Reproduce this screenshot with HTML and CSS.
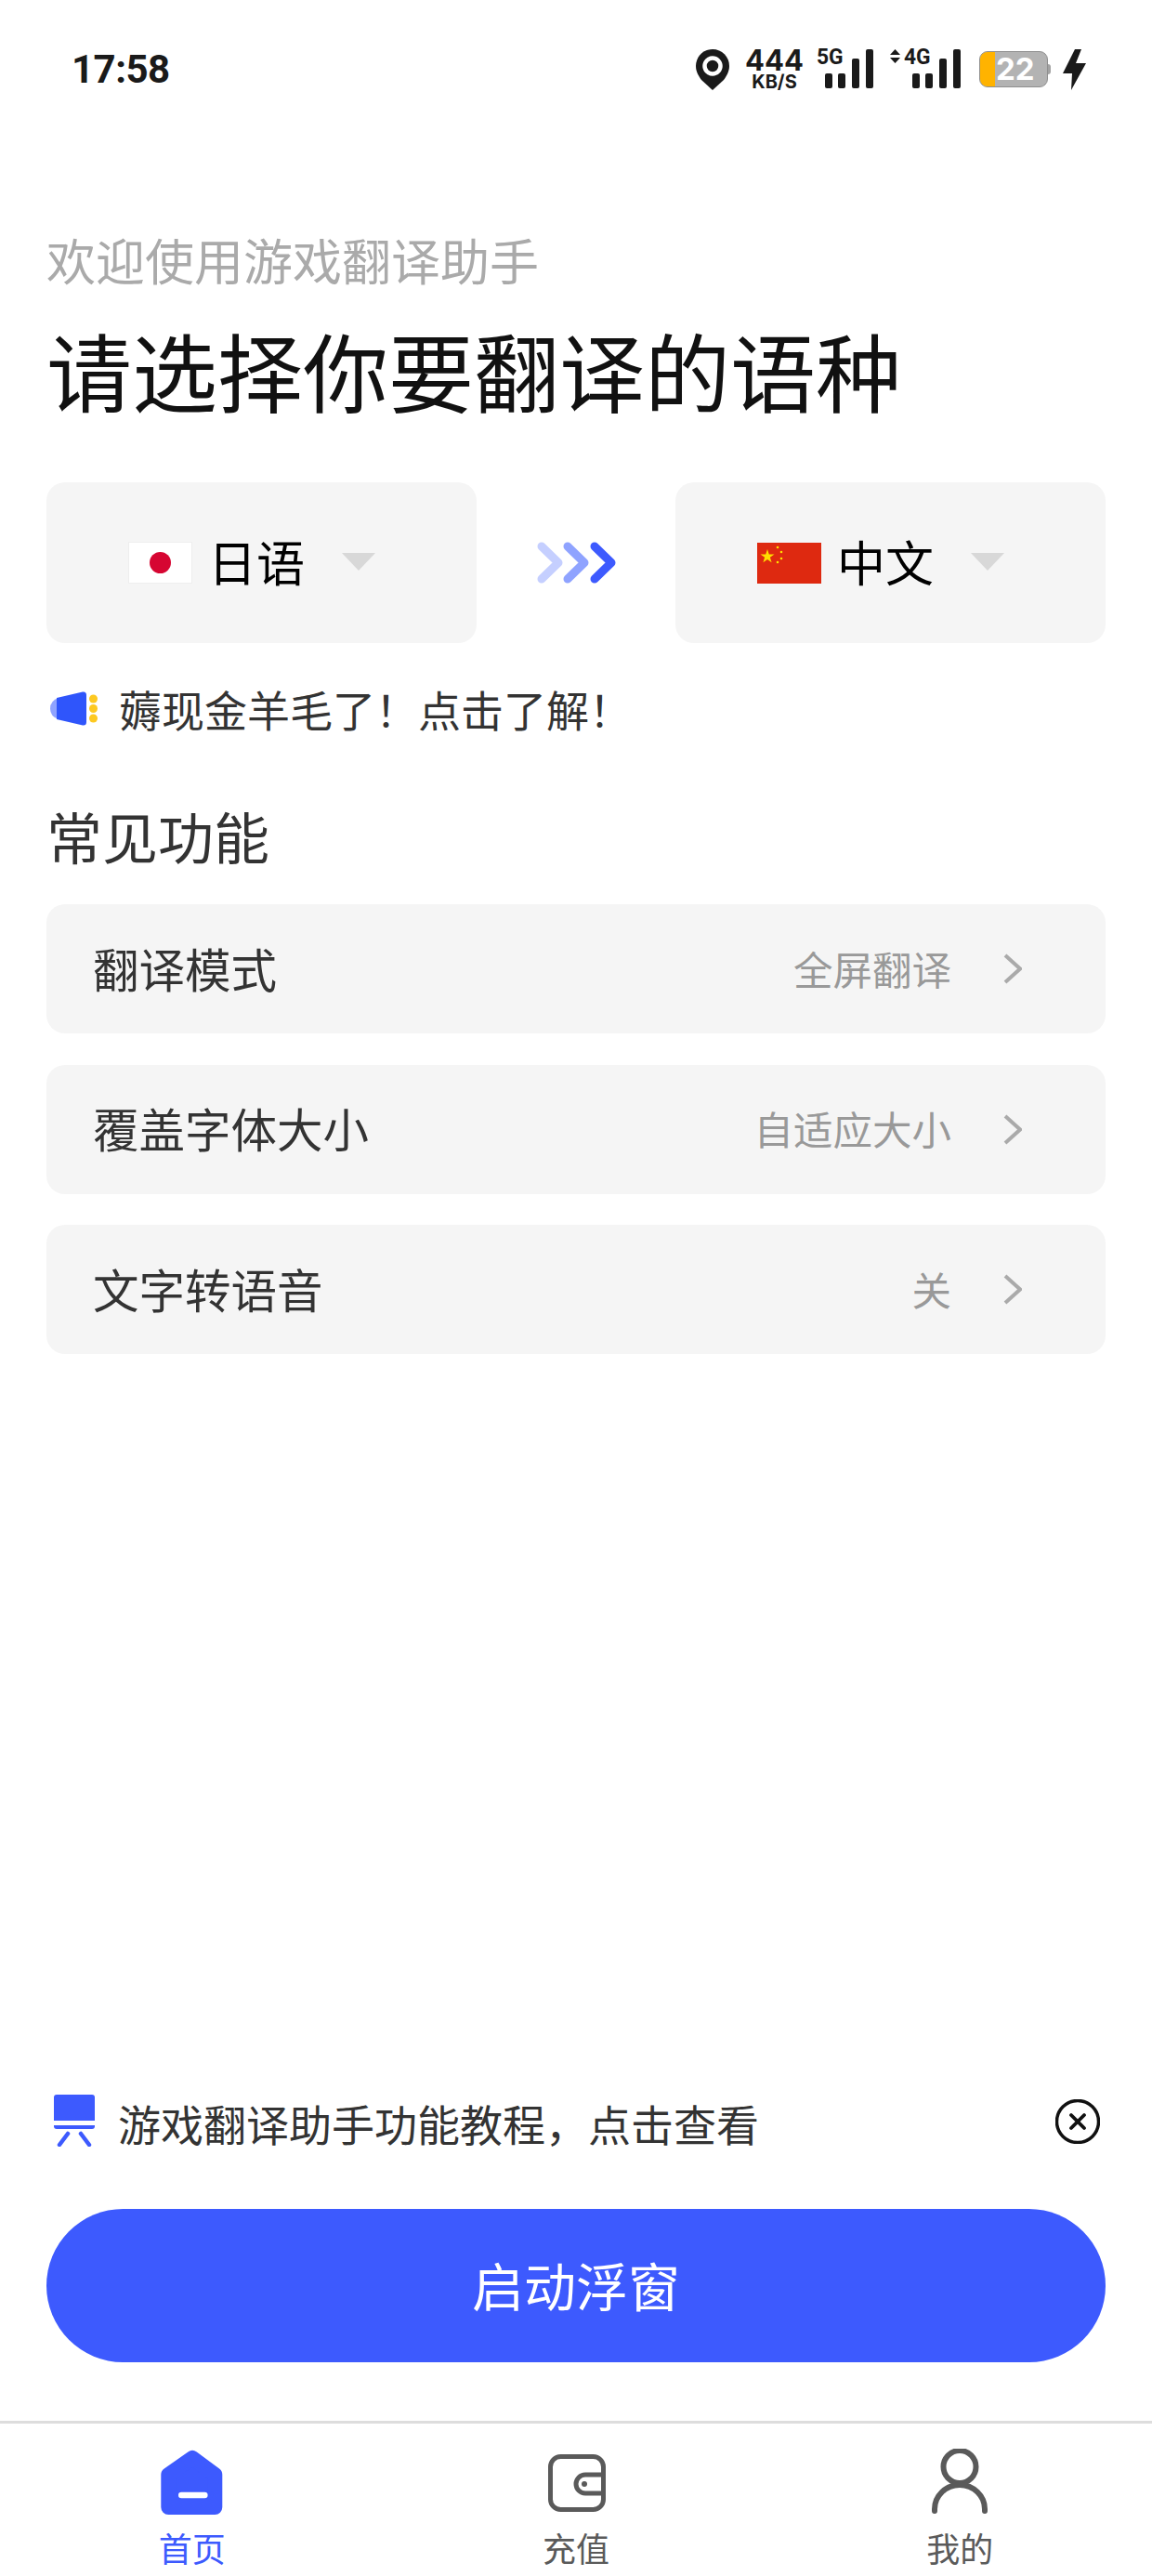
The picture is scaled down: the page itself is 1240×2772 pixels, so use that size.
FILE: index.html
```html
<!DOCTYPE html>
<html lang="zh-CN">
<head>
    <meta charset="UTF-8">
    <meta name="viewport" content="width=device-width, initial-scale=1.0">
    <title>游戏翻译助手</title>
    <link rel="stylesheet" href="styles.css">
</head>
<body>
    <div class="app">
        <div class="status-bar">
            <span class="clock">17:58</span>
            <div class="status-icons">
                <svg class="pin" width="36" height="44" viewBox="0 0 36 44">
                    <path d="M18 0C8 0 0 8 0 18c0 6 3 11 6 15l12 11 12-11c3-4 6-9 6-15C36 8 28 0 18 0z" fill="#1a1a1a"/>
                    <circle cx="18" cy="18" r="8.5" fill="none" stroke="#fff" stroke-width="4.5"/>
                </svg>
                <div class="speed">
                    <span class="speed-num">444</span>
                    <span class="speed-unit">KB/S</span>
                </div>
                <div class="net">
                    <div class="net-low">
                        <span class="net-label">5G</span>
                        <div class="net-bars"><i class="bar"></i><i class="bar"></i></div>
                    </div>
                    <i class="bar bar-mid"></i>
                    <i class="bar bar-full"></i>
                </div>
                <div class="net net-4g">
                    <svg class="net-arrows" width="11" height="15" viewBox="0 0 11 15">
                        <path d="M0 6L5.500 0L11 6zM0 9H11L5.500 15z" fill="#1a1a1a"/>
                    </svg>
                    <div class="net-low">
                        <span class="net-label">4G</span>
                        <div class="net-bars"><i class="bar"></i><i class="bar"></i></div>
                    </div>
                    <i class="bar bar-mid"></i>
                    <i class="bar bar-full"></i>
                </div>
                <div class="battery">
                    <div class="battery-level"></div>
                    <span class="battery-num">22</span>
                </div>
                <svg class="bolt" width="25" height="44" viewBox="0 0 25 44">
                    <path d="M13 0L0 26H10L9 44L25 15H14L20 0z" fill="#1a1a1a"/>
                </svg>
            </div>
        </div>

        <div class="home">
            <p class="greeting">欢迎使用游戏翻译助手</p>
            <h1 class="title">请选择你要翻译的语种</h1>

            <div class="lang-row">
                <div class="lang-card">
                    <div class="flag-jp"><span class="flag-jp-dot"></span></div>
                    <span class="lang-name">日语</span>
                    <span class="lang-caret"></span>
                </div>
                <svg class="lang-arrows" width="85" height="45" viewBox="0 0 85 45" fill="none" stroke-width="9" stroke-linecap="round" stroke-linejoin="round">
                    <path d="M5 5L23 22.500L5 40" stroke="#c5cfff"/>
                    <path d="M33 5L51 22.500L33 40" stroke="#8fa3ff"/>
                    <path d="M62 5L80 22.500L62 40" stroke="#3d5afe"/>
                </svg>
                <div class="lang-card">
                    <svg class="flag-cn" width="69" height="44" viewBox="0 0 69 44">
                        <rect width="69" height="44" fill="#de2910"/>
                        <path d="M11 7l1.800 5.400h5.700l-4.600 3.400 1.700 5.400-4.600-3.300-4.600 3.300 1.700-5.400-4.600-3.400h5.700z" fill="#ffde00"/>
                        <circle cx="22" cy="5" r="1.300" fill="#ffde00"/>
                        <circle cx="26" cy="10" r="1.300" fill="#ffde00"/>
                        <circle cx="26" cy="17" r="1.300" fill="#ffde00"/>
                        <circle cx="22" cy="21" r="1.300" fill="#ffde00"/>
                    </svg>
                    <span class="lang-name">中文</span>
                    <span class="lang-caret"></span>
                </div>
            </div>

            <div class="notice">
                <svg class="notice-icon" width="52" height="37" viewBox="0 0 52 37">
                    <path d="M9 7Q0 10 0 18.500Q0 27 9 30z" fill="#8fa3ff"/>
                    <path d="M7 7L35 0.500Q39 0 39 4V33Q39 37 35 36.500L7 30z" fill="#2f55fb"/>
                    <circle cx="46.500" cy="8" r="4.500" fill="#fdc921"/>
                    <circle cx="46.500" cy="18.500" r="4.500" fill="#fdc921"/>
                    <circle cx="46.500" cy="29" r="4.500" fill="#fdc921"/>
                </svg>
                <span class="notice-text">薅现金羊毛了！点击了解！</span>
            </div>

            <h2 class="section-title">常见功能</h2>

            <div class="option-list">
                <div class="option-row">
                    <span class="option-label">翻译模式</span>
                    <span class="option-value">全屏翻译</span>
                    <svg class="option-chevron" width="20" height="33" viewBox="0 0 20 33"><path d="M2 2L18 16.500L2 31"/></svg>
                </div>
                <div class="option-row">
                    <span class="option-label">覆盖字体大小</span>
                    <span class="option-value">自适应大小</span>
                    <svg class="option-chevron" width="20" height="33" viewBox="0 0 20 33"><path d="M2 2L18 16.500L2 31"/></svg>
                </div>
                <div class="option-row">
                    <span class="option-label">文字转语音</span>
                    <span class="option-value">关</span>
                    <svg class="option-chevron" width="20" height="33" viewBox="0 0 20 33"><path d="M2 2L18 16.500L2 31"/></svg>
                </div>
            </div>

            <div class="tutorial">
                <svg class="tutorial-icon" width="44" height="56" viewBox="0 0 44 56">
                    <path d="M3 0H41Q44 0 44 3V28H0V3Q0 0 3 0z" fill="#3d5afe"/>
                    <path d="M0 33H44V34Q44 37 41 37H3Q0 37 0 34z" fill="#3d5afe"/>
                    <path d="M15 42L6 54M29 42L38 54" fill="none" stroke="#3d5afe" stroke-width="4.500" stroke-linecap="round"/>
                </svg>
                <span class="tutorial-text">游戏翻译助手功能教程，点击查看</span>
                <svg class="tutorial-close" width="48" height="48" viewBox="0 0 48 48" fill="none" stroke="#111" stroke-linecap="round">
                    <circle cx="24" cy="24" r="22.500" stroke-width="3.500"/>
                    <path d="M17 17L31 31M31 17L17 31" stroke-width="3.800"/>
                </svg>
            </div>

            <div class="start-btn">启动浮窗</div>
        </div>

        <div class="tab-bar">
            <div class="tab tab-active">
                <svg width="72" height="72" viewBox="0 0 72 72">
                    <path d="M36 10L60.300 28V63H10.300V28z" fill="#3d5afe" stroke="#3d5afe" stroke-width="16" stroke-linejoin="round"/>
                    <rect x="21" y="46.700" width="31.600" height="6.600" rx="3.300" fill="#fff"/>
                </svg>
                <span class="tab-label">首页</span>
            </div>
            <div class="tab">
                <svg width="72" height="72" viewBox="0 0 72 72" fill="none" stroke="#5a5a5a" stroke-width="5">
                    <rect x="8.500" y="8.500" width="57" height="57" rx="11"/>
                    <path d="M65 28H46a10 10 0 0 0 0 20H65"/>
                    <circle cx="45" cy="38" r="3" fill="#5a5a5a" stroke="none"/>
                </svg>
                <span class="tab-label">充值</span>
            </div>
            <div class="tab">
                <svg width="72" height="72" viewBox="0 0 72 72" fill="none" stroke="#5a5a5a" stroke-width="6" stroke-linecap="round">
                    <circle cx="36" cy="19.500" r="17.500"/>
                    <path d="M9 67V65a27 26 0 0 1 54 0V67"/>
                </svg>
                <span class="tab-label">我的</span>
            </div>
        </div>
    </div>
</body>
</html>
```

FILE: styles.css
```css
:root {
    --blue: #3d5afe;
    --panel: #f5f5f5;
    --dark-text: #333;
    --mid-grey: #999;
    --tab-grey: #5a5a5a;
}

html, body {
    margin: 0;
    padding: 0;
    height: 100%;
}

body {
    font-family: "Noto Sans CJK SC", "Noto Sans", sans-serif;
    background: #fff;
    color: var(--dark-text);
    overflow: hidden;
}

.app {
    height: 2772px;
    display: flex;
    flex-direction: column;
}

/* Status bar */
.status-bar {
    display: flex;
    justify-content: space-between;
    align-items: flex-start;
    height: 44px;
    padding: 53px 71px 0 77px;
    flex-shrink: 0;
}
.clock {
    font-family: Roboto, sans-serif;
    font-weight: 700;
    font-size: 42px;
    line-height: 44px;
    letter-spacing: -0.5px;
    color: #1a1a1a;
}
.status-icons {
    display: flex;
    align-items: flex-start;
}
.speed {
    display: flex;
    flex-direction: column;
    align-items: center;
    width: 61px;
    margin-left: 18px;
    font-family: Inter, sans-serif;
    font-weight: 700;
    color: #1a1a1a;
}
.speed-num {
    font-size: 31px;
    line-height: 24px;
}
.speed-unit {
    font-size: 20px;
    line-height: 18px;
    margin-top: 2px;
}
.net {
    display: flex;
    align-items: flex-end;
    gap: 7px;
    height: 42px;
    margin-left: 17px;
}
.net-4g {
    margin-left: 18px;
}
.net-arrows {
    align-self: flex-start;
    margin-right: -1px;
}
.net-low {
    display: flex;
    flex-direction: column;
    height: 42px;
    justify-content: space-between;
}
.net-label {
    display: block;
    width: 29px;
    height: 17px;
    margin-left: -2px;
    font-family: Roboto, sans-serif;
    font-weight: 700;
    font-size: 24px;
    line-height: 17px;
    color: #1a1a1a;
    transform: scaleX(0.95);
    transform-origin: left center;
}
.net-bars {
    display: flex;
    gap: 6px;
    padding-left: 7px;
}
.bar {
    display: block;
    width: 8px;
    height: 16px;
    background: #1a1a1a;
    border-radius: 2px;
}
.bar-mid {
    height: 32px;
}
.bar-full {
    height: 42px;
}
.battery {
    position: relative;
    display: flex;
    align-items: center;
    box-sizing: border-box;
    width: 74px;
    height: 39px;
    margin: 2px 0 0 20px;
    background: #b3b3b3;
    border: 1px solid #8f8f8f;
    border-radius: 9px;
}
.battery::after {
    content: "";
    position: absolute;
    right: -4px;
    top: 13px;
    width: 3px;
    height: 11px;
    background: #a3a3a3;
    border-radius: 0 3px 3px 0;
}
.battery-level {
    width: 16px;
    height: 100%;
    background: #ffb300;
    border-radius: 8px 0 0 8px;
}
.battery-num {
    font-family: Inter, sans-serif;
    font-weight: 700;
    font-size: 33px;
    line-height: 37px;
    color: #fff;
    margin-left: 1px;
}
.bolt {
    margin-left: 16px;
}

/* Main column */
.home {
    flex: 1;
    display: flex;
    flex-direction: column;
    padding: 0 50px;
}
.greeting {
    margin: 152px 0 0;
    font-size: 53px;
    line-height: 60px;
    color: #aaa;
}
.title {
    margin: 33px 0 0;
    font-size: 92px;
    line-height: 110px;
    font-weight: 400;
    color: #111;
}

.lang-row {
    display: flex;
    justify-content: space-between;
    align-items: center;
    margin-top: 67px;
}
.lang-card {
    display: flex;
    align-items: center;
    box-sizing: border-box;
    width: 463px;
    height: 173px;
    padding-left: 88px;
    background: var(--panel);
    border-radius: 20px;
}
.flag-jp {
    display: flex;
    align-items: center;
    justify-content: center;
    box-sizing: border-box;
    width: 69px;
    height: 45px;
    background: #fff;
    border: 1px solid #eee;
}
.flag-jp-dot {
    width: 23px;
    height: 23px;
    border-radius: 50%;
    background: #d60632;
}
.lang-name {
    margin: -4px 0 0 17px;
    font-size: 52px;
    line-height: 60px;
    color: #000;
}
.lang-caret {
    width: 0;
    height: 0;
    margin: -2px 0 0 40px;
    border-left: 18.500px solid transparent;
    border-right: 18.500px solid transparent;
    border-top: 19px solid #d8d8d8;
}

.notice {
    display: flex;
    align-items: center;
    height: 60px;
    margin-top: 40px;
    padding-left: 4px;
}
.notice-text {
    margin-left: 22px;
    font-size: 46px;
    line-height: 60px;
}

.section-title {
    margin: 72px 0 0;
    font-size: 60px;
    line-height: 70px;
    font-weight: 400;
}

.option-list {
    display: flex;
    flex-direction: column;
    gap: 33.500px;
    margin-top: 39px;
}
.option-row {
    display: flex;
    align-items: center;
    box-sizing: border-box;
    height: 139px;
    padding: 0 90px 0 50px;
    background: var(--panel);
    border-radius: 20px;
}
.option-label {
    margin-top: -2px;
    font-size: 49.500px;
    line-height: 60px;
}
.option-value {
    margin: -2px 0 0 auto;
    font-size: 42.500px;
    line-height: 60px;
    color: var(--mid-grey);
}
.option-chevron {
    margin-left: 56px;
    fill: none;
    stroke: #aaa;
    stroke-width: 4;
}

/* Bottom of the page */
.tutorial {
    display: flex;
    align-items: center;
    margin-top: auto;
    padding: 0 6px 0 8px;
}
.tutorial-text {
    margin: 4px 0 0 25px;
    font-size: 46px;
    line-height: 50px;
}
.tutorial-close {
    margin: 2px 0 0 auto;
}
.start-btn {
    height: 165px;
    margin: 67px 0 63px;
    background: var(--blue);
    border-radius: 83px;
    color: #fff;
    font-size: 56px;
    line-height: 161px;
    text-align: center;
}

.tab-bar {
    display: grid;
    grid-template-columns: repeat(3, 1fr);
    height: 164px;
    border-top: 3px solid #ddd;
    flex-shrink: 0;
}
.tab {
    display: flex;
    flex-direction: column;
    align-items: center;
    padding-top: 27px;
    color: var(--tab-grey);
}
.tab-label {
    margin-top: 14px;
    font-size: 36px;
    line-height: 40px;
}
.tab-active {
    color: var(--blue);
}
```
